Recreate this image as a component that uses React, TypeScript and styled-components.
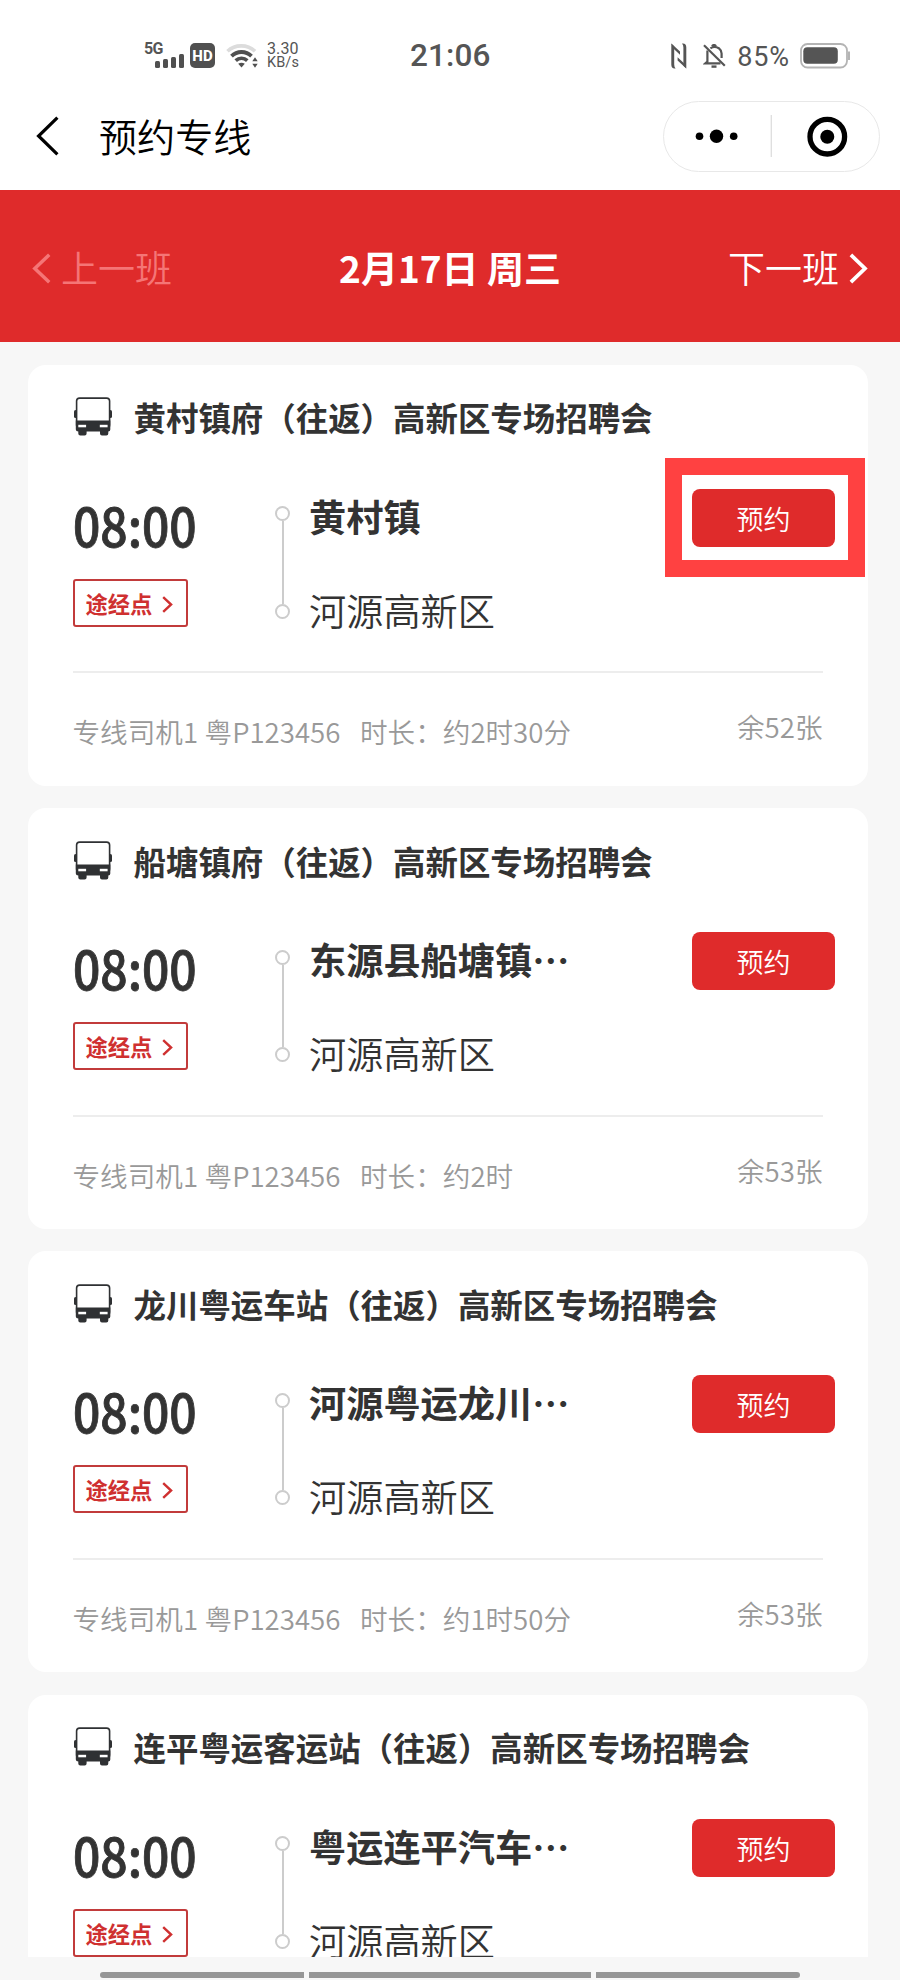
import React from "react";
import styled, { createGlobalStyle } from "styled-components";

const cjk = '"Noto Sans CJK SC", sans-serif';
const latin = 'Roboto, "Noto Sans CJK SC", sans-serif';

const GlobalStyle = createGlobalStyle`
  * { box-sizing: border-box; }
  body { margin: 0; background: #f7f7f7; font-family: ${cjk}; }
  button { font-family: inherit; }
`;

const Screen = styled.div`
  width: 900px;
  height: 1980px;
  display: flex;
  flex-direction: column;
  overflow: hidden;
  background: #f7f7f7;
`;

const StatusBar = styled.header`
  height: 90px;
  flex: none;
  display: grid;
  grid-template-columns: 266px 1fr auto;
  align-items: center;
  padding: 21px 49px 0 144px;
  background: #fff;
  color: #555;
  font-family: ${latin};
`;

const StatusGroup = styled.div<{ $end?: boolean }>`
  display: flex;
  align-items: center;
  justify-content: ${(p) => (p.$end ? "flex-end" : "flex-start")};
`;

const Signal = styled.div`
  width: 41px;
  height: 28px;
  position: relative;
  margin-right: 5px;
`;

const Network = styled.span`
  position: absolute;
  left: 0;
  top: 0;
  font-size: 16px;
  line-height: 14px;
  font-weight: 700;
  letter-spacing: -0.6px;
`;

const HdBadge = styled.span`
  width: 25px;
  height: 25px;
  border-radius: 5px;
  background: #505050;
  color: #fff;
  font-size: 15px;
  font-weight: 800;
  line-height: 26px;
  text-align: center;
`;

const Speed = styled.div`
  display: flex;
  flex-direction: column;
  margin-left: 7px;
  font-size: 16px;
  line-height: 14px;
  letter-spacing: 0.1px;
`;

const SpeedUnit = styled.span`
  font-size: 14.5px;
`;

const Clock = styled.div`
  font-size: 31.5px;
  line-height: 32px;
  font-weight: 500;
  letter-spacing: 0.1px;
  white-space: nowrap;
`;

const Percent = styled.span`
  font-size: 27px;
  line-height: 28px;
  margin: 2px 10px 0 11px;
  letter-spacing: 0.9px;
`;

const NavBar = styled.nav`
  height: 100px;
  flex: none;
  display: flex;
  align-items: center;
  padding: 0 20px 8px 36px;
  background: #fff;
  color: #000;
`;

const NavTitle = styled.h1`
  margin: 0 auto 0 40px;
  font-size: 38.1px;
  line-height: 50px;
  font-weight: 350;
`;

const Capsule = styled.div`
  width: 217px;
  height: 71px;
  border: 1.5px solid #e8e8e8;
  border-radius: 36px;
  display: flex;
  align-items: center;
`;

const Banner = styled.section`
  height: 152.3px;
  flex: none;
  display: grid;
  grid-template-columns: 1fr auto 1fr;
  align-items: center;
  padding: 2px 32px 0 32px;
  background: #df2b2b;
  color: #fff;
  font-size: 37px;
  line-height: 50px;

  svg {
    margin-top: 3px;
  }
`;

const Shift = styled.div<{ $disabled?: boolean; $end?: boolean }>`
  display: flex;
  align-items: center;
  gap: 10px;
  justify-content: ${(p) => (p.$end ? "flex-end" : "flex-start")};
  color: ${(p) => (p.$disabled ? "#f57576" : "#fff")};
  font-weight: 350;
`;

const BannerDate = styled.h2`
  margin: 0;
  font-size: 37px;
  line-height: 50px;
  font-weight: 700;
`;

const List = styled.main`
  height: 1615px;
  flex: none;
  overflow: hidden;
  display: flex;
  flex-direction: column;
  gap: 22.2px;
  padding: 22.7px 32.5px 0 27.5px;
`;

const Card = styled.article`
  height: 421px;
  flex: none;
  border-radius: 18px;
  background: #fff;
  color: #333;
  padding: 25px 32.5px 0 45px;
`;

const CardHead = styled.div`
  height: 54px;
  display: flex;
  align-items: center;
  gap: 22px;
`;

const CardTitle = styled.h3`
  margin: 0;
  padding-top: 1px;
  font-size: 32.45px;
  line-height: 54px;
  font-weight: 700;
  white-space: nowrap;
`;

const Trip = styled.div`
  height: 227.5px;
  padding-top: 45px;
  display: flex;
  align-items: flex-start;
`;

const Departure = styled.div`
  width: 202.5px;
  display: flex;
  flex-direction: column;
  align-items: flex-start;
`;

const Time = styled.div`
  height: 90px;
  font-size: 53px;
  line-height: 70px;
  font-weight: 500;
  transform: scaleX(0.905);
  transform-origin: 0 50%;
  -webkit-text-stroke: 0.9px #333;
`;

const StopsTag = styled.div`
  width: 115px;
  height: 48px;
  border: 2.5px solid #c23b3b;
  border-radius: 3px;
  display: flex;
  align-items: center;
  gap: 10px;
  padding-left: 11px;
  color: #cf3030;
  font-size: 22.3px;
  line-height: 30px;
  font-weight: 700;

  svg {
    margin-top: 3px;
  }
`;

const Track = styled.div`
  width: 15px;
  margin-top: 17.5px;
  display: flex;
  flex-direction: column;
  align-items: center;
`;

const TrackDot = styled.i`
  width: 15px;
  height: 15px;
  border: 2.5px solid #ccc;
  border-radius: 50%;
`;

const TrackLine = styled.i`
  width: 2px;
  height: 82.5px;
  background: #ccc;
`;

const Places = styled.div`
  flex: 1;
  padding: 1px 0 0 19px;
`;

const Place = styled.div<{ $from?: boolean }>`
  height: 94px;
  font-size: 37.2px;
  line-height: 52px;
  font-weight: ${(p) => (p.$from ? 700 : 350)};
  white-space: nowrap;
`;

const Action = styled.div`
  position: relative;
`;

const BookButton = styled.button`
  display: block;
  width: 143px;
  height: 58px;
  padding: 2px 0 0;
  border: 0;
  border-radius: 8px;
  background: #df2b2b;
  color: #fff;
  font-size: 27px;
  line-height: 56px;
  font-weight: 350;
`;

const Highlight = styled.div`
  position: absolute;
  left: -27px;
  top: -31px;
  width: 200px;
  height: 119px;
  border: 17px solid #ff4141;
`;

const CardFoot = styled.footer`
  margin-right: 12.5px;
  border-top: 2px solid #ededed;
  display: flex;
  justify-content: space-between;
  padding-top: 33px;
  color: #999;
  font-size: 27.6px;
  line-height: 40px;
  font-weight: 350;
  white-space: pre;
  word-spacing: 0.4px;
`;

const Driver = styled.span`
  padding-top: 5px;
`;

const SystemNav = styled.div`
  flex: none;
  display: flex;
  gap: 5px;
  padding: 14.5px 100px 0;
`;

const NavHandle = styled.i<{ $w: number; $r: string }>`
  width: ${(p) => p.$w}px;
  height: 6px;
  border-radius: ${(p) => p.$r};
  background: #969696;
`;

const Chevron = ({ w, h, sw, right }: { w: number; h: number; sw: number; right?: boolean }) => (
  <svg width={w} height={h} fill="none" stroke="currentColor" strokeWidth={sw}>
    <path
      d={
        right
          ? `M${sw / 2} ${sw / 2}L${w - sw * 0.8} ${h / 2}L${sw / 2} ${h - sw / 2}`
          : `M${w - sw / 2} ${sw / 2}L${sw * 0.8} ${h / 2}L${w - sw / 2} ${h - sw / 2}`
      }
    />
  </svg>
);

const SignalBars = () => (
  <svg width="41" height="28" fill="#505050">
    <rect x="11" y="19" width="5" height="7" rx="1.5" />
    <rect x="19" y="17" width="5" height="9" rx="1.5" />
    <rect x="27" y="15" width="5" height="11" rx="1.5" />
    <rect x="35" y="12" width="5" height="14" rx="1.5" />
  </svg>
);

const WifiGlyph = styled.svg`
  margin-left: 11px;
  flex: none;
`;

const WifiIcon = () => (
  <WifiGlyph width="34" height="26" viewBox="0 0 34 26" fill="none">
    <path d="M1.5 8.3C9 1 21.5 1 29 8.3" stroke="#dcdcdc" strokeWidth="3.6" />
    <path d="M5.5 13.2C11 7.6 20 7.6 25.5 13.2" stroke="#505050" strokeWidth="3.8" />
    <path d="M9.7 17.6C13 14.4 18 14.4 21.3 17.6" stroke="#505050" strokeWidth="3.6" />
    <path d="M12.2 20.7Q15.5 18.6 18.8 20.7L15.5 24.6Z" fill="#505050" />
    <path d="M26.3 18.2L29 14.2L31.7 18.2ZM26.3 20.8H31.7L29 24.8Z" fill="#505050" />
  </WifiGlyph>
);

const NfcIcon = () => (
  <svg width="16" height="26" viewBox="0 0 16 26" fill="#555">
    <path d="M0.3 0.6L3.2 3.2V21.5Q3.2 24 4.6 25.4Q0.3 26 0.3 21.5Z" />
    <path d="M15.3 25.4L12.4 22.8V4.5Q12.4 2 11 0.6Q15.3 0 15.3 4.5Z" />
    <path d="M0.3 0.6L9 8.6V11.8L2.6 5.8ZM15.3 25.4L6.6 17.4V14.2L13 20.2Z" />
  </svg>
);

const BellGlyph = styled.svg`
  margin-left: 16px;
  flex: none;
`;

const BellOffIcon = () => (
  <BellGlyph width="23" height="24" viewBox="0 0 23 24" fill="none" stroke="#555" strokeWidth="2.2">
    <path d="M1 1.2L21.8 21.8" />
    <path d="M4.4 6.5V17.5L2.4 19.3H17.5" />
    <path d="M7.4 4.3Q11.5 1.5 15.8 4.2Q18.6 6.5 18.6 9.5V14" />
    <path d="M8.5 22.6H13.5" strokeWidth="2.4" />
    <path d="M9 2.2Q11 -0.3 13 2.2" />
  </BellGlyph>
);

const BatteryIcon = () => (
  <svg width="51" height="26" viewBox="0 0 51 26">
    <rect x="1" y="1" width="46" height="23.5" rx="6.5" fill="#fff" stroke="#b4b4b4" strokeWidth="1.8" />
    <rect x="3.3" y="4.3" width="34.5" height="16.5" rx="4" fill="#555" />
    <path d="M49 8.5V17" stroke="#b4b4b4" strokeWidth="2" />
  </svg>
);

const CapsuleIcons = () => (
  <svg width="214" height="68" viewBox="0 0 214 68">
    <circle cx="35.5" cy="34.2" r="3.8" />
    <circle cx="52.5" cy="34.2" r="6.7" />
    <circle cx="69.7" cy="34.2" r="3.8" />
    <path d="M107.3 13V55" stroke="#dedede" strokeWidth="1.3" />
    <circle cx="163.3" cy="34.7" r="17.3" fill="none" stroke="#000" strokeWidth="5.3" />
    <circle cx="163.3" cy="34.7" r="7" />
  </svg>
);

const BusGlyph = styled.svg`
  flex: none;
`;

const BusIcon = () => (
  <BusGlyph width="39" height="39" viewBox="0 0 39 39">
    <rect x="3.6" y="1.1" width="33" height="30" rx="3" fill="#fff" stroke="#2f3133" strokeWidth="1.6" />
    <rect x="1" y="13" width="3" height="8" rx="1.5" fill="#2f3133" />
    <rect x="36" y="13" width="3" height="8" rx="1.5" fill="#2f3133" />
    <path
      d="M2.8 23.5H37.3V32.5Q37.3 34.5 35.3 34.5V36.5Q35.3 38.5 33.3 38.5H29Q27 38.5 27 36.5V34.5H13.6V36.5Q13.6 38.5 11.6 38.5H7.3Q5.3 38.5 5.3 36.5V34.5Q2.8 34.5 2.8 32.5Z"
      fill="#2f3133"
    />
    <rect x="5.3" y="27.8" width="7.8" height="2.5" fill="#fff" />
    <rect x="26.8" y="27.8" width="7.8" height="2.5" fill="#fff" />
  </BusGlyph>
);

type Line = { title: string; from: string; duration: string; left: number; marked?: boolean };

const lines: Line[] = [
  { title: "黄村镇府（往返）高新区专场招聘会", from: "黄村镇", duration: "约2时30分", left: 52, marked: true },
  { title: "船塘镇府（往返）高新区专场招聘会", from: "东源县船塘镇…", duration: "约2时", left: 53 },
  { title: "龙川粤运车站（往返）高新区专场招聘会", from: "河源粤运龙川…", duration: "约1时50分", left: 53 },
  { title: "连平粤运客运站（往返）高新区专场招聘会", from: "粤运连平汽车…", duration: "约2时", left: 53 },
];

const LineCard = ({ line, last }: { line: Line; last: boolean }) => (
  <Card>
    <CardHead>
      <BusIcon />
      <CardTitle>{line.title}</CardTitle>
    </CardHead>
    <Trip>
      <Departure>
        <Time>08:00</Time>
        <StopsTag>
          途经点
          <Chevron w={11} h={17} sw={2.4} right />
        </StopsTag>
      </Departure>
      <Track>
        <TrackDot />
        <TrackLine />
        <TrackDot />
      </Track>
      <Places>
        <Place $from>{line.from}</Place>
        <Place>河源高新区</Place>
      </Places>
      <Action>
        <BookButton>预约</BookButton>
        {line.marked && <Highlight />}
      </Action>
    </Trip>
    {!last && (
      <CardFoot>
        <Driver>{`专线司机1 粤P123456   时长：${line.duration}`}</Driver>
        <span>余{line.left}张</span>
      </CardFoot>
    )}
  </Card>
);

export default function App() {
  return (
    <Screen lang="zh-CN">
      <GlobalStyle />
      <StatusBar>
        <StatusGroup>
          <Signal>
            <Network>5G</Network>
            <SignalBars />
          </Signal>
          <HdBadge>HD</HdBadge>
          <WifiIcon />
          <Speed>
            <span>3.30</span>
            <SpeedUnit>KB/s</SpeedUnit>
          </Speed>
        </StatusGroup>
        <Clock>21:06</Clock>
        <StatusGroup $end>
          <NfcIcon />
          <BellOffIcon />
          <Percent>85%</Percent>
          <BatteryIcon />
        </StatusGroup>
      </StatusBar>
      <NavBar>
        <Chevron w={23} h={40} sw={3.2} />
        <NavTitle>预约专线</NavTitle>
        <Capsule>
          <CapsuleIcons />
        </Capsule>
      </NavBar>
      <Banner>
        <Shift $disabled>
          <Chevron w={19} h={31} sw={3.5} />
          上一班
        </Shift>
        <BannerDate>2月17日 周三</BannerDate>
        <Shift $end>
          下一班
          <Chevron w={19} h={31} sw={3.8} right />
        </Shift>
      </Banner>
      <List>
        {lines.map((line, i) => (
          <LineCard key={line.title} line={line} last={i === lines.length - 1} />
        ))}
      </List>
      <SystemNav>
        <NavHandle $w={204} $r="3px 0 0 3px" />
        <NavHandle $w={282} $r="0" />
        <NavHandle $w={204} $r="0 3px 3px 0" />
      </SystemNav>
    </Screen>
  );
}
